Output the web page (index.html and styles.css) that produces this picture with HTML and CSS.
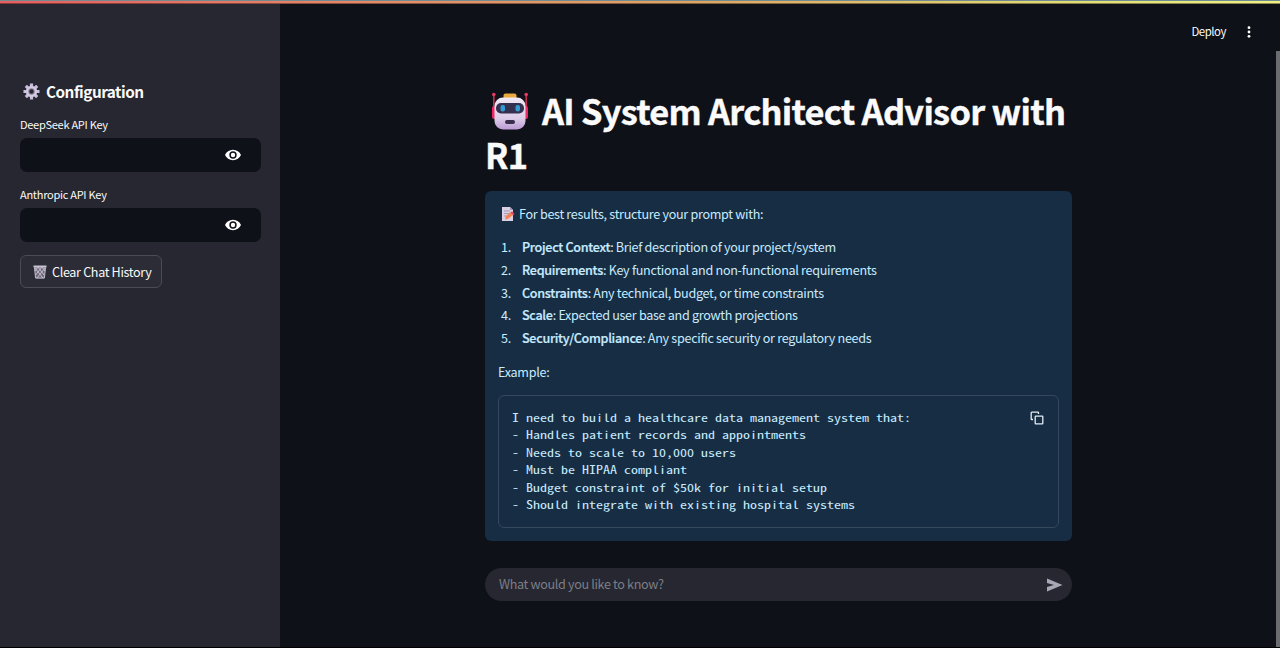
FILE: index.html
```html
<!DOCTYPE html>
<html lang="en">
<head>
<meta charset="utf-8">
<title>AI System Architect Advisor with R1</title>
<link rel="stylesheet" href="styles.css">
</head>
<body>
<div class="decoration"></div>
<div class="app">
  <aside class="sidebar">
    <h2 class="side-title">
      <svg class="gear" viewBox="0 0 18 18"><g stroke="#c9bedb" stroke-width="3.4"><path d="M9 .5v17M.5 9h17M3 3l12 12M15 3 3 15"/></g><circle cx="9" cy="9" r="4.700" fill="#8d8299" stroke="#d3c9e2" stroke-width="2.600"/><circle cx="9" cy="9" r="2.300" fill="#292832"/></svg>
      <span class="side-title-text">Configuration</span>
    </h2>
    <label class="label label-first">DeepSeek API Key</label>
    <div class="field"><svg class="eye" viewBox="0 0 16 12"><path fill="#fff" fill-rule="evenodd" d="M8 .8C4.4.8 1.4 3 0 6c1.4 3 4.4 5.2 8 5.2S14.600 9 16 6C14.600 3 11.600.8 8 .8Zm0 8.900a3.700 3.700 0 1 1 0-7.400 3.700 3.700 0 0 1 0 7.400Zm0-1.500a2.200 2.200 0 1 0 0-4.400 2.200 2.200 0 0 0 0 4.400Z"/></svg></div>
    <label class="label label-second">Anthropic API Key</label>
    <div class="field"><svg class="eye" viewBox="0 0 16 12"><path fill="#fff" fill-rule="evenodd" d="M8 .8C4.4.8 1.4 3 0 6c1.4 3 4.4 5.2 8 5.2S14.600 9 16 6C14.600 3 11.600.8 8 .8Zm0 8.900a3.700 3.700 0 1 1 0-7.400 3.700 3.700 0 0 1 0 7.400Zm0-1.500a2.200 2.200 0 1 0 0-4.400 2.200 2.200 0 0 0 0 4.400Z"/></svg></div>
    <button class="clear">
      <svg class="trash" viewBox="0 0 14 14"><path d="M1.500 1.500h11l-1 12h-9Z" fill="#6f6b7a"/><path d="m2 3 8 10M5 2l6 8M9 2l3 4M12 3 4 13M9 2 2.500 10M5 2 2 6" stroke="#d5cfdf" stroke-width=".8"/><path d="M1.500 2.500 2.600 13h8.800l1.100-10.500" fill="none" stroke="#c5bdd1"/><path d="M.5.5h13v2H.5Z" fill="#cac3d4"/></svg>
      <span class="clear-text">Clear Chat History</span>
    </button>
  </aside>
  <main class="main">
    <header class="toolbar"><span class="deploy">Deploy</span>
      <svg class="dots" viewBox="0 0 4 12"><g fill="#fff"><circle cx="2" cy="1.700" r="1.400"/><circle cx="2" cy="6" r="1.400"/><circle cx="2" cy="10.300" r="1.400"/></g></svg>
    </header>
    <div class="body">
      <div class="content">
        <h1 class="title">
          <span class="title-row">
            <svg class="robot" viewBox="0 0 38 38">
              <defs><linearGradient id="face" x2="0" y2="1"><stop stop-color="#f0e9f5"/><stop offset=".65" stop-color="#ddcde9"/><stop offset="1" stop-color="#bc9bd5"/></linearGradient></defs>
              <path d="M2.800 3v15M35.200 3v15" stroke="#c72c52" stroke-width="1.600"/><circle cx="2.800" cy="2.500" r="1.800" fill="#e73d65"/><circle cx="35.200" cy="2.500" r="1.800" fill="#e73d65"/>
              <rect x="1" y="14" width="5" height="13" rx="2" fill="#ed2864"/><rect x="32" y="14" width="5" height="13" rx="2" fill="#ed2864"/>
              <rect x="12.500" y="1.500" width="13" height="6" rx="2" fill="#e9a93d"/>
              <rect x="3.500" y="5.500" width="31" height="32" rx="8.500" fill="url(#face)"/>
              <rect x="5" y="11" width="28" height="10.500" rx="5" fill="#35304d"/>
              <rect x="9.500" y="13" width="4.500" height="6.500" rx="2" fill="#319bd5"/><rect x="24.500" y="13" width="4.500" height="6.500" rx="2" fill="#319bd5"/>
              <rect x="14" y="28" width="10" height="4" rx="1.900" fill="#392e4c"/>
            </svg>
            <span class="title-text">AI System Architect Advisor with</span>
          </span>
          <span class="title-end">R1</span>
        </h1>
        <section class="info">
          <p class="intro">
            <svg class="memo" viewBox="0 0 14 16"><path d="M1 1h8l3 3v11H1Z" fill="#d9d0e3"/><path d="m9 1 3 3H9Z" fill="#a99bb8"/><path d="M3 5h6M3 7.500h6M3 10h3" stroke="#9b91aa" stroke-width=".8"/><path d="m4 13.500 1-3.500 5-4 2.500 2.500-5 4Z" fill="#f48252"/><path d="m9.500 6.500 1.500-1.200L13.500 8l-1.500 1.200Z" fill="#e64760"/></svg>
            <span>For best results, structure your prompt with:</span>
          </p>
          <ol class="list">
            <li><span class="num">1.</span><span><b>Project Context</b>: Brief description of your project/system</span></li>
            <li><span class="num">2.</span><span><b>Requirements</b>: Key functional and non-functional requirements</span></li>
            <li><span class="num">3.</span><span><b>Constraints</b>: Any technical, budget, or time constraints</span></li>
            <li><span class="num">4.</span><span><b>Scale</b>: Expected user base and growth projections</span></li>
            <li><span class="num">5.</span><span><b>Security/Compliance</b>: Any specific security or regulatory needs</span></li>
          </ol>
          <p class="example">Example:</p>
          <div class="code"><pre class="code-text">I need to build a healthcare data management system that:
- Handles patient records and appointments
- Needs to scale to 10,000 users
- Must be HIPAA compliant
- Budget constraint of $50k for initial setup
- Should integrate with existing hospital systems</pre>
            <svg class="copy" viewBox="0 0 14 14"><g fill="none" stroke="#e4edf5" stroke-width="1.300"><rect x="5.200" y="5.200" width="7.600" height="7.600" rx=".6"/><path d="M3 8.500H1.800a.6.600 0 0 1-.6-.6V1.800a.6.600 0 0 1 .6-.6h6.100a.6.600 0 0 1 .6.600V3"/></g></svg>
          </div>
        </section>
        <div class="chat"><span class="placeholder">What would you like to know?</span>
          <svg class="send" viewBox="0 0 16 14"><path fill="#a6a8b5" d="M0 .5 15.500 7 0 13.500V9l7-2-7-2Z"/></svg>
        </div>
      </div>
      <div class="scroll"></div>
    </div>
  </main>
</div>
<div class="bottom"></div>
</body>
</html>
```
FILE: styles.css
```css
* { box-sizing: border-box; }
body { margin: 0; width: 1280px; height: 648px; overflow: hidden; display: flex; flex-direction: column; background: #0e1117; color: #fafafa; font-family: "Noto Sans CJK JP", "Noto Sans CJK SC", sans-serif; white-space: nowrap; }
svg { display: block; flex: none; }
h1, h2, p, ol, pre { margin: 0; padding: 0; }
.decoration { height: 4px; background: linear-gradient(transparent 1.5px, rgba(30,20,25,.15) 2px, rgba(20,10,10,.75) 3px), linear-gradient(90deg, #e65f61, #e38c69 30%, #dca765 55%, #e0df78 85%, #eff187); border-top: 1px solid #718b91; flex: none; }
.app { flex: 1; display: flex; min-height: 0; }
.bottom { height: 1px; background: #000; }
.sidebar { width: 280px; background: #262730; padding: 75px 20px 0; display: flex; flex-direction: column; align-items: flex-start; }
.side-title { display: flex; align-items: center; height: 24px; gap: 6px; padding-left: 3px; font-size: 15.3px; line-height: 22px; font-weight: 700; letter-spacing: -.5px; }
.gear { width: 17px; height: 17px; }
.label { font-size: 11px; line-height: 18px; height: 18px; letter-spacing: -.27px; }
.label-first { margin-top: 12px; }
.label-second { margin-top: 13px; }
.field { width: 241px; height: 34px; margin-top: 5px; border-radius: 7px; background: #0e1117; display: flex; align-items: center; justify-content: flex-end; padding-right: 20px; }
.eye { width: 16px; height: 12px; }
.clear { width: 142px; height: 33px; margin-top: 13px; padding: 0 0 0 12px; display: flex; align-items: center; gap: 5px; background: #2b2c36; border: 1px solid #4a4b54; border-radius: 6px; color: #fafafa; font: 12.6px/20px "Noto Sans CJK JP", sans-serif; letter-spacing: -.34px; }
.trash { width: 14px; height: 14px; }
.main { flex: 1; display: flex; flex-direction: column; }
.toolbar { height: 47px; display: flex; justify-content: flex-end; align-items: center; padding: 9px 29px 0 0; gap: 21px; font-size: 11.4px; line-height: 18px; letter-spacing: -.45px; }
.deploy { padding-bottom: 2px; }
.dots { width: 4px; height: 12px; }
.body { flex: 1; display: flex; justify-content: space-between; padding-left: 205px; }
.content { width: 587px; padding-top: 37px; }
.scroll { width: 4px; background: #6b6c70; }
.title { font-size: 34.4px; line-height: 45px; font-weight: 700; letter-spacing: -.74px; -webkit-text-stroke: .4px #fafafa; }
.title-row { display: flex; align-items: center; padding-left: 6px; gap: 13px; height: 45px; }
.robot { width: 38px; height: 38px; }
.title-end { display: block; line-height: 43px; height: 45px; }
.info { margin-top: 13px; height: 350px; border-radius: 6px; background: #172d43; color: #c7ebff; padding: 11px 13px 13px; font-size: 12.6px; line-height: 23px; letter-spacing: -.3px; }
.intro { display: flex; align-items: center; padding-left: 3px; gap: 4px; height: 23px; }
.memo { width: 14px; height: 16px; }
.list { list-style: none; margin-top: 11px; }
.list li { display: flex; height: 22.75px; line-height: 22px; }
.num { width: 24px; padding-left: 3px; }
.list b { font-weight: 500; -webkit-text-stroke: .2px #c7ebff; }
.example { margin-top: 10px; }
.code { margin-top: 12px; height: 133px; border: 1px solid #35485c; border-radius: 6px; display: flex; justify-content: space-between; align-items: flex-start; padding: 13px 14px 0 13px; }
.code-text { font: 11px/17.5px "Noto Sans Mono CJK JP", "Liberation Mono", monospace; letter-spacing: 0; transform: scaleX(1.273); transform-origin: left; }
.copy { width: 14px; height: 14px; margin-top: 2px; }
.chat { margin-top: 27px; height: 33px; border-radius: 17px; background: #262730; display: flex; align-items: center; justify-content: space-between; padding: 0 9px 0 14px; font-size: 12.6px; line-height: 20px; letter-spacing: -.34px; color: #7d7e87; }
.placeholder { padding-bottom: 1px; }
.send { width: 16px; height: 14px; }
```
